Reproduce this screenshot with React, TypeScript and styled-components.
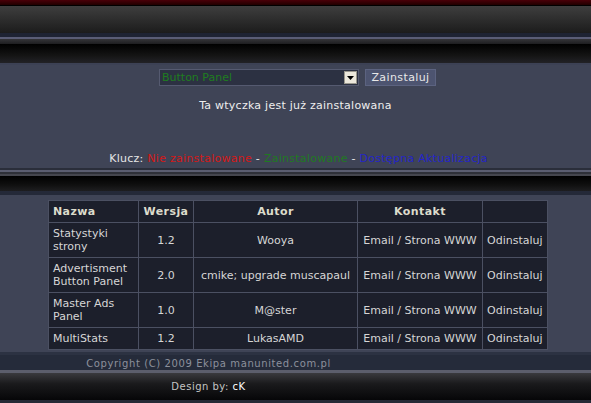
import React from "react";
import styled, { createGlobalStyle } from "styled-components";

const Global = createGlobalStyle`
  html, body { margin: 0; padding: 0; background: #3f4456; }
  body { font-family: "DejaVu Sans", Verdana, sans-serif; font-size: 11px; color: #e0e0e0; }
`;

const Page = styled.div`
  width: 591px;
  height: 403px;
  overflow: hidden;
  display: flex;
  flex-direction: column;
`;

const Band = styled.div<{ $h: number; $bg: string }>`
  height: ${(p) => p.$h}px;
  flex: none;
  background: ${(p) => p.$bg};
`;

const Content = styled.div<{ $h: number }>`
  height: ${(p) => p.$h}px;
  flex: none;
  background: #3f4456;
  display: flex;
  flex-direction: column;
  align-items: center;
`;

const FormRow = styled.div`
  margin-top: 4px;
  margin-left: 4px;
  display: flex;
  gap: 6px;
  align-items: center;
`;

const Select = styled.div`
  width: 196px;
  height: 15px;
  border: 1px solid #555a70;
  background: #2c3142;
  display: flex;
  align-items: center;
  justify-content: space-between;
  padding-left: 2px;
  color: #1f7d1f;
  font-size: 11px;
`;

const Arrow = styled.div`
  width: 13px;
  height: 13px;
  margin-right: 1px;
  background: #ece8dc;
  border: 1px solid #9a988e;
  box-sizing: border-box;
  display: flex;
  align-items: center;
  justify-content: center;
`;

const Button = styled.div`
  width: 71px;
  height: 17px;
  background: #4d5470;
  border: 1px solid #5c6380;
  box-sizing: border-box;
  color: #e8e8e8;
  font-size: 11px;
  display: flex;
  align-items: center;
  justify-content: center;
  letter-spacing: 0.4px;
`;

const Info = styled.div`
  margin-top: 13px;
  color: #eeeeee;
  font-size: 11px;
  letter-spacing: 0.25px;
`;

const Key = styled.div`
  margin-top: 40px;
  margin-left: 6px;
  font-size: 11px;
  color: #e6e6e6;
  letter-spacing: 0.27px;
`;

const KeyItem = styled.span<{ $c: string }>`
  color: ${(p) => p.$c};
`;

const Table = styled.table`
  margin-top: 5px;
  margin-left: 5px;
  border-collapse: collapse;
  background: #1c1f2b;
  font-size: 11px;
  color: #d6d6d6;
`;

const Th = styled.th<{ $w: number; $align?: string }>`
  width: ${(p) => p.$w}px;
  height: 22px;
  border: 1px solid #4b5062;
  padding: 0 4px;
  text-align: ${(p) => p.$align || "center"};
  color: #dcdccc;
  font-weight: bold;
  letter-spacing: 0.4px;
  box-sizing: border-box;
`;

const Td = styled.td<{ $align?: string; $h: number }>`
  height: ${(p) => p.$h}px;
  border: 1px solid #4b5062;
  padding: 0 4px;
  text-align: ${(p) => p.$align || "center"};
  line-height: 13px;
  box-sizing: border-box;
  white-space: nowrap;
`;

const Copyright = styled.div`
  width: 417px;
  text-align: center;
  color: #8c909c;
  font-size: 10px;
  line-height: 17px;
  letter-spacing: 0.6px;
`;

const FooterBand = styled.div`
  height: 15px;
  background: #252b3a;
  flex: none;
`;

const DesignBand = styled.div`
  height: 27px;
  flex: none;
  background: linear-gradient(#3a3a3e, #1a1a1c 40%, #060608);
`;

const Design = styled.div`
  width: 417px;
  text-align: center;
  color: #c4c4c4;
  font-size: 10px;
  line-height: 27px;
  letter-spacing: 0.5px;
  b { color: #ffffff; font-weight: normal; }
`;

const rows = [
  { n: "Statystyki\nstrony", v: "1.2", a: "Wooya", h: 35 },
  { n: "Advertisment\nButton Panel", v: "2.0", a: "cmike; upgrade muscapaul", h: 35 },
  { n: "Master Ads\nPanel", v: "1.0", a: "M@ster", h: 35 },
  { n: "MultiStats", v: "1.2", a: "LukasAMD", h: 22 },
];

export default function App() {
  return (
    <Page>
      <Global />
      <Band $h={5} $bg="linear-gradient(#4a0008, #200000)" />
      <Band $h={1} $bg="#000" />
      <Band $h={27} $bg="linear-gradient(#3e3e3e, #1c1c1c)" />
      <Band $h={4} $bg="#1e2333" />
      <Band $h={2} $bg="#5a5d76" />
      <Band $h={5} $bg="linear-gradient(#343438, #1e1e20)" />
      <Band $h={19} $bg="linear-gradient(#000000, #141414 60%, #222226)" />
      <Band $h={2} $bg="#3c4154" />
      <Content $h={103}>
        <FormRow>
          <Select>
            <span>Button Panel</span>
            <Arrow>
              <svg width="7" height="4" viewBox="0 0 7 4">
                <polygon points="0,0 7,0 3.5,4" fill="#000" />
              </svg>
            </Arrow>
          </Select>
          <Button>Zainstaluj</Button>
        </FormRow>
        <Info>Ta wtyczka jest już zainstalowana</Info>
        <Key>
          Klucz: <KeyItem $c="#d41818">Nie zainstalowane</KeyItem> -{" "}
          <KeyItem $c="#1f7a22">Zainstalowane</KeyItem> -{" "}
          <KeyItem $c="#2424c8">Dostępna Aktualizacja</KeyItem>
        </Key>
      </Content>
      <Band $h={2} $bg="#2a2e3a" />
      <Band $h={2} $bg="#5a5d70" />
      <Band $h={2} $bg="#2e3038" />
      <Band $h={2} $bg="#45464e" />
      <Band $h={15} $bg="linear-gradient(#000000, #101010 60%, #1e1e20)" />
      <Band $h={4} $bg="#242938" />
      <Content $h={157}>
        <Table>
          <thead>
            <tr>
              <Th $w={90} $align="left">Nazwa</Th>
              <Th $w={55}>Wersja</Th>
              <Th $w={164}>Autor</Th>
              <Th $w={125}>Kontakt</Th>
              <Th $w={65}></Th>
            </tr>
          </thead>
          <tbody>
            {rows.map((r) => (
              <tr key={r.a}>
                <Td $align="left" $h={r.h}>
                  {r.n.split("\n").map((l, i) => (
                    <div key={i}>{l}</div>
                  ))}
                </Td>
                <Td $h={r.h}>{r.v}</Td>
                <Td $h={r.h}>{r.a}</Td>
                <Td $h={r.h}>Email / Strona WWW</Td>
                <Td $align="left" $h={r.h}>Odinstaluj</Td>
              </tr>
            ))}
          </tbody>
        </Table>
      </Content>
      <Band $h={3} $bg="#2c3242" />
      <FooterBand>
        <Copyright>Copyright (C) 2009 Ekipa manunited.com.pl</Copyright>
      </FooterBand>
      <Band $h={3} $bg="#5c5e6c" />
      <DesignBand>
        <Design>
          Design by: <b>cK</b>
        </Design>
      </DesignBand>
      <Band $h={3} $bg="#262a36" />
    </Page>
  );
}
